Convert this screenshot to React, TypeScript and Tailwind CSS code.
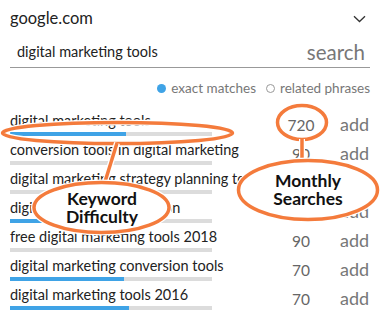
import React from 'react'

const ROWS = [
  { keyword: 'digital marketing tools', volume: '720', difficulty: 116 },
  { keyword: 'conversion tools in digital marketing', volume: '90', difficulty: 0 },
  { keyword: 'digital marketing strategy planning tools', volume: '90', difficulty: 0 },
  { keyword: 'digital marketing definition', volume: '70', difficulty: 110 },
  { keyword: 'free digital marketing tools 2018', volume: '90', difficulty: 0 },
  { keyword: 'digital marketing conversion tools', volume: '70', difficulty: 114 },
  { keyword: 'digital marketing tools 2016', volume: '70', difficulty: 119 },
]

function Callouts() {
  const orange = '#f47b3c'
  return (
    <svg className="absolute inset-0 pointer-events-none" width="380" height="318" viewBox="0 0 380 318">
      {/* keyword difficulty */}
      <ellipse cx="117.5" cy="133" rx="115" ry="10.5" fill="none" stroke="#fff" strokeWidth="6" />
      <ellipse cx="117.5" cy="133" rx="115" ry="10.5" fill="none" stroke={orange} strokeWidth="3.5" />
      <line x1="117" y1="143" x2="104" y2="185" stroke="#fff" strokeWidth="6" />
      <line x1="117" y1="143" x2="104" y2="185" stroke={orange} strokeWidth="3.5" />
      <ellipse cx="101.5" cy="207.5" rx="67.5" ry="25" fill="#fff" stroke="#fff" strokeWidth="6" />
      <ellipse cx="101.5" cy="207.5" rx="67.5" ry="25" fill="#fff" stroke={orange} strokeWidth="3.5" />

      {/* monthly searches */}
      <ellipse cx="302" cy="122.5" rx="24.5" ry="17" fill="none" stroke="#fff" strokeWidth="6" />
      <ellipse cx="302" cy="122.5" rx="24.5" ry="17" fill="none" stroke={orange} strokeWidth="3.5" />
      <line x1="302" y1="139" x2="302" y2="162" stroke="#fff" strokeWidth="6" />
      <line x1="302" y1="139" x2="302" y2="162" stroke={orange} strokeWidth="3.5" />
      <ellipse cx="308" cy="190" rx="69.5" ry="29.5" fill="#fff" stroke="#fff" strokeWidth="6" />
      <ellipse cx="308" cy="190" rx="69.5" ry="29.5" fill="#fff" stroke={orange} strokeWidth="3.5" />
    </svg>
  )
}

export default function App() {
  return (
    <div className="relative w-[380px] h-[318px] overflow-hidden bg-white font-['Lato',sans-serif] text-[#222]">
      <div className="px-[10px]">
        <div className="flex h-[36px] items-start justify-between pt-[8px] pr-[4px]">
          <span className="text-[16.5px] leading-[20px]">google.com</span>
          <svg width="13" height="8" viewBox="0 0 13 8" className="mt-[7px]">
            <path d="M1 1.2 L6.5 6.5 L12 1.2" fill="none" stroke="#333" strokeWidth="1.3" />
          </svg>
        </div>

        <div className="flex h-[32px] items-end justify-between border-b border-[#999] pb-[3px] pr-[5px]">
          <span className="mb-[3px] pl-[7px] text-[14.5px] leading-[18px]">digital marketing tools</span>
          <span className="text-[20.5px] leading-[23px] text-[#777]">search</span>
        </div>

        <div className="mt-[12px] flex items-center justify-end gap-[5px] text-[13.5px] leading-[16px] text-[#777]">
          <span className="h-[9px] w-[9px] rounded-full bg-[#3fa3e6]" />
          <span>exact matches</span>
          <span className="ml-[5px] h-[9px] w-[9px] rounded-full border-[1.5px] border-[#999]" />
          <span>related phrases</span>
        </div>

        <div className="mt-[16px] flex flex-col">
          {ROWS.map((row) => (
            <div key={row.keyword} className="flex h-[29px]">
              <div className="flex w-[202px] shrink-0 flex-col">
                <span className="whitespace-nowrap text-[14.5px] leading-[18px]">{row.keyword}</span>
                <div className="mt-[2px] h-[4px] w-[202px] bg-[#dcdcdc]">
                  <div className="h-full bg-[#3fa3e6]" style={{ width: row.difficulty }} />
                </div>
              </div>
              <div className="ml-[67px] flex items-baseline pt-[1px]">
                <span className="w-[44px] text-center text-[15.5px] leading-[20px] text-[#666]">{row.volume}</span>
                <span className="ml-[17px] text-[18px] leading-[22px] text-[#777]">add</span>
              </div>
            </div>
          ))}
        </div>
      </div>

      <Callouts />

      <div className="absolute left-[34px] top-[190px] w-[136px] text-center text-[17.5px] font-bold leading-[18px] text-[#111]">
        Keyword
        <br />
        Difficulty
      </div>
      <div className="absolute left-[238px] top-[172px] w-[140px] text-center text-[17.5px] font-bold leading-[18px] text-[#111]">
        Monthly
        <br />
        Searches
      </div>
    </div>
  )
}
